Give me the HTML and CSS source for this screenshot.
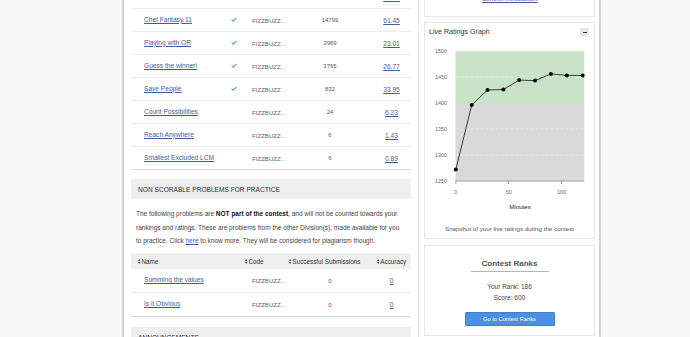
FILE: index.html
```html
<!DOCTYPE html>
<html lang="en">
<head>
  <meta charset="UTF-8">
  <meta name="viewport" content="width=device-width, initial-scale=1.0">
  <title>Contest Problems</title>
  <link rel="stylesheet" href="styles.css">
</head>
<body>
  <div class="page">
    <!-- Problems column -->
    <main class="main">
      <div class="problems">
        <div class="row">
          <div class="cell name"></div>
          <div class="cell code"></div>
          <div class="cell subs"></div>
          <div class="cell acc"><a href="#">72.10</a></div>
        </div>
        <div class="row">
          <div class="cell name"><a href="#">Chef Fantasy 11</a><svg class="check" viewBox="0 0 6 5"><path d="M0.6 2.6 L2.2 4.1 L5.4 0.8"/></svg></div>
          <div class="cell code">FIZZBUZZ…</div>
          <div class="cell subs">14799</div>
          <div class="cell acc"><a href="#">61.45</a></div>
        </div>
        <div class="row">
          <div class="cell name"><a href="#">Playing with OR</a><svg class="check" viewBox="0 0 6 5"><path d="M0.6 2.6 L2.2 4.1 L5.4 0.8"/></svg></div>
          <div class="cell code">FIZZBUZZ…</div>
          <div class="cell subs">3969</div>
          <div class="cell acc"><a href="#">23.01</a></div>
        </div>
        <div class="row">
          <div class="cell name"><a href="#">Guess the winner!</a><svg class="check" viewBox="0 0 6 5"><path d="M0.6 2.6 L2.2 4.1 L5.4 0.8"/></svg></div>
          <div class="cell code">FIZZBUZZ…</div>
          <div class="cell subs">3765</div>
          <div class="cell acc"><a href="#">26.77</a></div>
        </div>
        <div class="row">
          <div class="cell name"><a href="#">Save People</a><svg class="check" viewBox="0 0 6 5"><path d="M0.6 2.6 L2.2 4.1 L5.4 0.8"/></svg></div>
          <div class="cell code">FIZZBUZZ…</div>
          <div class="cell subs">832</div>
          <div class="cell acc"><a href="#">33.95</a></div>
        </div>
        <div class="row">
          <div class="cell name"><a href="#">Count Possibilities</a></div>
          <div class="cell code">FIZZBUZZ…</div>
          <div class="cell subs">24</div>
          <div class="cell acc"><a href="#">6.23</a></div>
        </div>
        <div class="row">
          <div class="cell name"><a href="#">Reach Anywhere</a></div>
          <div class="cell code">FIZZBUZZ…</div>
          <div class="cell subs">6</div>
          <div class="cell acc"><a href="#">1.43</a></div>
        </div>
        <div class="row">
          <div class="cell name"><a href="#">Smallest Excluded LCM</a></div>
          <div class="cell code">FIZZBUZZ…</div>
          <div class="cell subs">6</div>
          <div class="cell acc"><a href="#">0.89</a></div>
        </div>
      </div>

      <div class="section-title">Non scorable problems for practice</div>
      <p class="note">The following problems are <b>NOT part of the contest</b>, and will not be counted towards your rankings and ratings. These are problems from the other Division(s), made available for you to practice. Click <a href="#">here</a> to know more. They will be considered for plagiarism though.</p>

      <div class="practice">
        <div class="table-head">
          <div class="th th-name"><svg class="sort" viewBox="0 0 3 6"><path d="M1.5 0 L3 2.4 L0 2.4 Z M1.5 6 L3 3.6 L0 3.6 Z"/></svg>Name</div>
          <div class="th th-code"><svg class="sort" viewBox="0 0 3 6"><path d="M1.5 0 L3 2.4 L0 2.4 Z M1.5 6 L3 3.6 L0 3.6 Z"/></svg>Code</div>
          <div class="th th-subs"><svg class="sort" viewBox="0 0 3 6"><path d="M1.5 0 L3 2.4 L0 2.4 Z M1.5 6 L3 3.6 L0 3.6 Z"/></svg>Successful Submissions</div>
          <div class="th th-acc"><svg class="sort" viewBox="0 0 3 6"><path d="M1.5 0 L3 2.4 L0 2.4 Z M1.5 6 L3 3.6 L0 3.6 Z"/></svg>Accuracy</div>
        </div>
        <div class="row row-tall">
          <div class="cell name"><a href="#">Summing the values</a></div>
          <div class="cell code">FIZZBUZZ…</div>
          <div class="cell subs">0</div>
          <div class="cell acc"><a href="#">0</a></div>
        </div>
        <div class="row row-tall">
          <div class="cell name"><a href="#">Is it Obvious</a></div>
          <div class="cell code">FIZZBUZZ…</div>
          <div class="cell subs">0</div>
          <div class="cell acc"><a href="#">0</a></div>
        </div>
      </div>

      <div class="section-title announce">Announcements</div>
    </main>

    <!-- Sidebar -->
    <aside class="side">
      <div class="card intro">
        <a href="#">Contest Introduction</a>
      </div>

      <div class="card graph">
        <div class="graph-head">
          <span>Live Ratings Graph</span>
          <span class="collapse"><i></i></span>
        </div>
        <svg class="chart" width="169" height="175" viewBox="0 0 169 175">
          <rect x="30.5" y="10" width="128.8" height="52" fill="#c9e3c9"/>
          <rect x="30.5" y="62" width="128.8" height="78" fill="#d9d9d9"/>
          <g stroke="#ffffff" stroke-opacity="0.55" stroke-dasharray="3 2" stroke-width="0.7">
            <line x1="30.5" y1="10" x2="159.3" y2="10"/>
            <line x1="30.5" y1="36" x2="159.3" y2="36"/>
            <line x1="30.5" y1="88" x2="159.3" y2="88"/>
            <line x1="30.5" y1="114" x2="159.3" y2="114"/>
          </g>
          <g stroke="#8c8c8c" stroke-width="0.8">
            <line x1="30.5" y1="140" x2="159.3" y2="140"/>
            <line x1="30.8" y1="140" x2="30.8" y2="143"/>
            <line x1="83.7" y1="140" x2="83.7" y2="143"/>
            <line x1="136.5" y1="140" x2="136.5" y2="143"/>
          </g>
          <g class="ylab">
            <text x="22" y="12">1500</text>
            <text x="22" y="38">1450</text>
            <text x="22" y="64">1400</text>
            <text x="22" y="90">1350</text>
            <text x="22" y="116">1300</text>
            <text x="22" y="142">1250</text>
          </g>
          <g class="xlab">
            <text x="30.8" y="153">0</text>
            <text x="83.7" y="153">50</text>
            <text x="136.5" y="153">100</text>
          </g>
          <text class="xtitle" x="95" y="168">Minutes</text>
          <polyline fill="none" stroke="#111" stroke-width="0.8"
            points="30.8,128.6 46.7,64.1 62.5,49 78.4,48.5 94.2,39.1 110.1,39.6 125.9,32.9 141.8,34.4 157.6,34.4"/>
          <g fill="#000">
            <circle cx="30.8" cy="128.6" r="2"/>
            <circle cx="46.7" cy="64.1" r="2"/>
            <circle cx="62.5" cy="49" r="2"/>
            <circle cx="78.4" cy="48.5" r="2"/>
            <circle cx="94.2" cy="39.1" r="2"/>
            <circle cx="110.1" cy="39.6" r="2"/>
            <circle cx="125.9" cy="32.9" r="2"/>
            <circle cx="141.8" cy="34.4" r="2"/>
            <circle cx="157.6" cy="34.4" r="2"/>
          </g>
        </svg>
        <p class="caption">Snapshot of your live ratings during the contest</p>
      </div>

      <div class="card ranks">
        <div class="ranks-head"><span>Contest Ranks</span></div>
        <p class="ranks-info">Your Rank: 186<br>Score: 600</p>
        <div class="ranks-action"><a href="#" class="btn">Go to Contest Ranks</a></div>
      </div>
    </aside>
  </div>
</body>
</html>
```

FILE: styles.css
```css
/* Reset */
* {
  margin: 0;
  padding: 0;
  box-sizing: border-box;
}
html, body {
  height: 100%;
  overflow: hidden;
}
body {
  font-family: "Liberation Sans", Arial, sans-serif;
  font-size: 6.6px;
  background: #f7f7f7;
  color: #333;
}
a {
  color: #3f5c9b;
}
/* Page frame (scrolled a little down) */
.page {
  display: flex;
  width: 479px;
  min-height: 400px;
  margin: -14px 0 0 122px;
  background: #fff;
  border-left: 2px solid #d3d3d3;
  border-right: 2px solid #d3d3d3;
}
.main {
  width: 295px;
  padding: 0 7px;
  border-right: 1px solid #ececec;
}
.side {
  width: 180px;
  padding: 0 4px 0 5px;
}
/* Problem tables */
.row, .table-head {
  display: grid;
  grid-template-columns: 109px 48px 84px 39px;
  align-items: center;
}
.row {
  height: 23px;
  border-bottom: 1px solid #ececec;
}
.row:last-child {
  border-bottom-color: #d9d9d9;
}
.row-tall {
  height: 24px;
}
.name {
  display: flex;
  align-items: center;
  justify-content: space-between;
  padding: 0 3px 2px 13px;
}
.check {
  width: 6px;
  height: 5px;
  fill: none;
  stroke: #5cb85c;
  stroke-width: 1.2;
}
.code {
  padding-left: 12px;
  font-size: 6.1px;
  color: #666;
}
.subs {
  text-align: center;
  font-size: 6px;
  color: #555;
}
.acc {
  text-align: center;
}
/* Section headers */
.section-title {
  display: flex;
  align-items: center;
  height: 20px;
  margin-top: 9px;
  padding-left: 7px;
  background: #eeeeee;
  text-transform: uppercase;
  color: #333;
}
.announce {
  margin-top: 10px;
}
.note {
  width: 269px;
  margin: 8px 0 5.5px;
  padding-left: 5px;
  font-size: 6.5px;
  line-height: 13.5px;
  color: #444;
}
.note b {
  color: #111;
}
.table-head {
  height: 16px;
  background: #eeeeee;
  font-size: 6.3px;
  color: #333;
}
.th {
  display: flex;
  align-items: center;
  gap: 1px;
}
.th-name { padding-left: 7px; }
.th-code { padding-left: 5px; }
.th-subs { padding-left: 1px; }
.th-acc { justify-content: center; }
.sort {
  width: 2.5px;
  height: 5px;
  fill: #555;
}
/* Sidebar cards */
.card {
  background: #fff;
  border: 1px solid #e6e6e6;
}
.intro {
  display: flex;
  justify-content: center;
  height: 31px;
  padding-top: 8px;
  font-size: 6.2px;
}
.graph {
  margin-top: 5px;
}
.graph-head {
  display: flex;
  align-items: center;
  justify-content: space-between;
  height: 18px;
  padding: 0 5px 0 4px;
  font-size: 7.1px;
  color: #333;
}
.collapse {
  display: flex;
  align-items: center;
  justify-content: center;
  width: 9px;
  height: 9px;
  background: #e8e8e8;
}
.collapse i {
  width: 4px;
  height: 1px;
  background: #333;
}
.chart {
  display: block;
}
.chart text {
  font-family: "Liberation Sans", Arial, sans-serif;
}
.ylab text {
  font-size: 5.4px;
  fill: #666;
  text-anchor: end;
}
.xlab text {
  font-size: 5.4px;
  fill: #666;
  text-anchor: middle;
}
.xtitle {
  font-size: 6.2px;
  fill: #222;
  text-anchor: middle;
}
.caption {
  margin-top: 6px;
  padding-bottom: 2px;
  line-height: 14px;
  text-align: center;
  font-size: 6.2px;
  color: #555;
}
.ranks {
  margin-top: 6px;
  padding: 13px 0 9px;
  text-align: center;
}
.ranks-head {
  display: flex;
  justify-content: center;
}
.ranks-head span {
  width: 78px;
  padding-bottom: 2px;
  border-bottom: 1px solid #b5b5b5;
  font-size: 8px;
  line-height: 10px;
  font-weight: bold;
  color: #555;
}
.ranks-info {
  margin-top: 10px;
  line-height: 10.5px;
  font-size: 6.5px;
  color: #444;
}
.ranks-action {
  display: flex;
  justify-content: center;
  margin-top: 9px;
}
.btn {
  display: flex;
  align-items: center;
  justify-content: center;
  width: 90px;
  height: 14px;
  background: #4a8fe1;
  border: 1px solid #3f80cf;
  border-radius: 1px;
  color: #fff;
  font-size: 5.7px;
  text-decoration: none;
}
```
